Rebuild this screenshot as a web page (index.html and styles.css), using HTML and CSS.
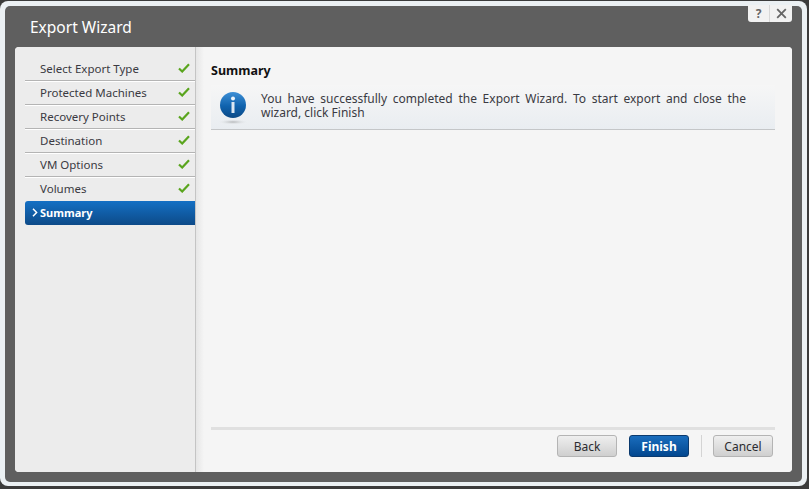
FILE: index.html
```html
<!DOCTYPE html>
<html lang="en">
<head>
<meta charset="utf-8">
<title>Export Wizard</title>
<link rel="stylesheet" href="styles.css">
</head>
<body>
<div class="window">
  <div class="win-controls">
    <span class="ctl ctl-help">?</span>
    <span class="ctl ctl-close"><svg width="11" height="11" viewBox="0 0 11 11"><path d="M1.2 1.2L9.8 9.8M9.8 1.2L1.2 9.8" stroke="#666" stroke-width="1.8" fill="none"/></svg></span>
  </div>
  <div class="inner">
    <h1 class="title">Export Wizard</h1>
    <div class="panel">
      <nav class="side">
        <div class="step"><span>Select Export Type</span><svg class="check" width="12" height="10" viewBox="0 0 12 10"><path d="M1 5.5L4.2 8.5L11 1.2" stroke="#5aa51e" stroke-width="2.2" fill="none"/></svg></div>
        <div class="step"><span>Protected Machines</span><svg class="check" width="12" height="10" viewBox="0 0 12 10"><path d="M1 5.5L4.2 8.5L11 1.2" stroke="#5aa51e" stroke-width="2.2" fill="none"/></svg></div>
        <div class="step"><span>Recovery Points</span><svg class="check" width="12" height="10" viewBox="0 0 12 10"><path d="M1 5.5L4.2 8.5L11 1.2" stroke="#5aa51e" stroke-width="2.2" fill="none"/></svg></div>
        <div class="step"><span>Destination</span><svg class="check" width="12" height="10" viewBox="0 0 12 10"><path d="M1 5.5L4.2 8.5L11 1.2" stroke="#5aa51e" stroke-width="2.2" fill="none"/></svg></div>
        <div class="step"><span>VM Options</span><svg class="check" width="12" height="10" viewBox="0 0 12 10"><path d="M1 5.5L4.2 8.5L11 1.2" stroke="#5aa51e" stroke-width="2.2" fill="none"/></svg></div>
        <div class="step step-last"><span>Volumes</span><svg class="check" width="12" height="10" viewBox="0 0 12 10"><path d="M1 5.5L4.2 8.5L11 1.2" stroke="#5aa51e" stroke-width="2.2" fill="none"/></svg></div>
        <div class="step-active"><svg class="chev" width="6" height="9" viewBox="0 0 6 9"><path d="M1 0.8L4.6 4.5L1 8.2" stroke="#fff" stroke-width="1.5" fill="none"/></svg><span>Summary</span></div>
      </nav>
      <main class="content">
        <h2 class="heading">Summary</h2>
        <div class="banner">
          <svg class="info" width="32" height="34" viewBox="0 0 32 34">
            <defs>
              <linearGradient id="orb" x1="0" y1="0" x2="0" y2="1"><stop offset="0" stop-color="#3d8fd6"/><stop offset="0.55" stop-color="#0f62ad"/><stop offset="1" stop-color="#0c4a86"/></linearGradient>
              <radialGradient id="shade"><stop offset="0" stop-color="#b4b6b8"/><stop offset="1" stop-color="#e8ebee" stop-opacity="0"/></radialGradient>
            </defs>
            <ellipse cx="16" cy="31" rx="15" ry="2.6" fill="url(#shade)"/>
            <circle cx="16" cy="14" r="13" fill="url(#orb)"/>
            <circle cx="16" cy="7.5" r="2" fill="#eef4fa"/>
            <rect x="14.5" y="11" width="3" height="11" fill="#dbe7f2"/>
          </svg>
          <p class="msg">You have successfully completed the Export Wizard. To start export and close the wizard, click Finish</p>
        </div>
        <div class="spacer"></div>
        <div class="foot">
          <button class="btn" type="button">Back</button>
          <button class="btn btn-primary" type="button">Finish</button>
          <span class="sep"></span>
          <button class="btn" type="button">Cancel</button>
        </div>
      </main>
    </div>
  </div>
</div>
</body>
</html>
```
FILE: styles.css
```css
* { box-sizing: border-box; }
html, body { height: 100%; }
body {
  margin: 0;
  background: #3b3b3b;
  font-family: "Noto Sans", Tahoma, sans-serif;
  font-size: 12px;
  overflow: hidden;
}
.window {
  position: relative;
  width: 807px;
  height: 485px;
  margin: 1px 0 0 0;
  padding: 5px 5px 4px 5px;
  background: #ebf0f3;
  border-radius: 8px;
}
.win-controls {
  position: absolute;
  top: 4px;
  right: 15px;
  display: flex;
  height: 17px;
  background: #f2f2f2;
  border-radius: 0 0 3px 3px;
}
.ctl {
  width: 22px;
  display: flex;
  align-items: center;
  justify-content: center;
  color: #666;
  font-weight: bold;
  font-size: 12px;
}
.ctl-help { border-right: 1px solid #d8d8d8; }
.inner {
  height: 100%;
  padding: 0 10px 10px 10px;
  background: #5f5f5f;
  border-radius: 5px;
  display: flex;
  flex-direction: column;
}
.title {
  margin: 0;
  height: 41px;
  padding: 12px 0 0 15px;
  font-size: 15.5px;
  line-height: 18px;
  font-weight: normal;
  color: #fff;
}
.panel {
  flex: 1;
  display: flex;
  background: #f5f5f5;
  border-radius: 4px;
  overflow: hidden;
}
.side {
  width: 181px;
  padding: 10px 0 0 10px;
  background: #ececec;
  border-right: 1px solid #c4c4c4;
  display: flex;
  flex-direction: column;
  font-size: 11.5px;
}
.step {
  height: 24px;
  padding: 0 5px 0 15px;
  display: flex;
  align-items: center;
  justify-content: space-between;
  color: #3a3a42;
  border-bottom: 1px solid #b4b4b4;
  box-shadow: 0 1px 0 #fff;
}
.check { margin-bottom: 2px; }
.step-last { border-bottom-color: transparent; box-shadow: none; }
.step-active {
  height: 24px;
  padding: 0 0 1px 7px;
  display: flex;
  align-items: center;
  gap: 2px;
  color: #fff;
  font-size: 11px;
  font-weight: bold;
  background: linear-gradient(#1470c4, #0d4a88);
  border-radius: 3px 0 0 3px;
}
.content {
  flex: 1;
  display: flex;
  flex-direction: column;
  padding: 15px 17px 15px 15px;
  background: linear-gradient(90deg, #e6e6e6, #f5f5f5 8px);
}
.heading {
  margin: 0;
  font-size: 12.5px;
  line-height: 18px;
  font-weight: bold;
  color: #111;
}
.banner {
  height: 45px;
  margin-top: 5px;
  display: flex;
  align-items: flex-start;
  padding: 6px 29px 0 6px;
  background: linear-gradient(#f6f6f6, #e9edf1);
  border-bottom: 1px solid #c4c6c8;
}
.info { flex: none; }
.msg {
  margin: 1px 0 0 12px;
  flex: 1;
  line-height: 14px;
  color: #3a3a42;
  text-align: justify;
}
.spacer { flex: 1; }
.foot {
  border-top: 3px solid #e0e0e0;
  padding: 5px 2px 0 0;
  display: flex;
  justify-content: flex-end;
  align-items: center;
}
.btn {
  width: 60px;
  height: 22px;
  margin-left: 12px;
  padding: 0;
  font: inherit;
  color: #2c2c30;
  background: linear-gradient(#efefef, #cfcfcf);
  border: 1px solid #b4b4b4;
  border-radius: 3px;
}
.btn-primary {
  color: #fff;
  font-weight: bold;
  background: linear-gradient(#1a6dbd, #02478f);
  border-color: #0b3a6e;
}
.sep {
  width: 1px;
  height: 22px;
  margin: 0 -1px 0 12px;
  background: #d4d4d4;
}
```
